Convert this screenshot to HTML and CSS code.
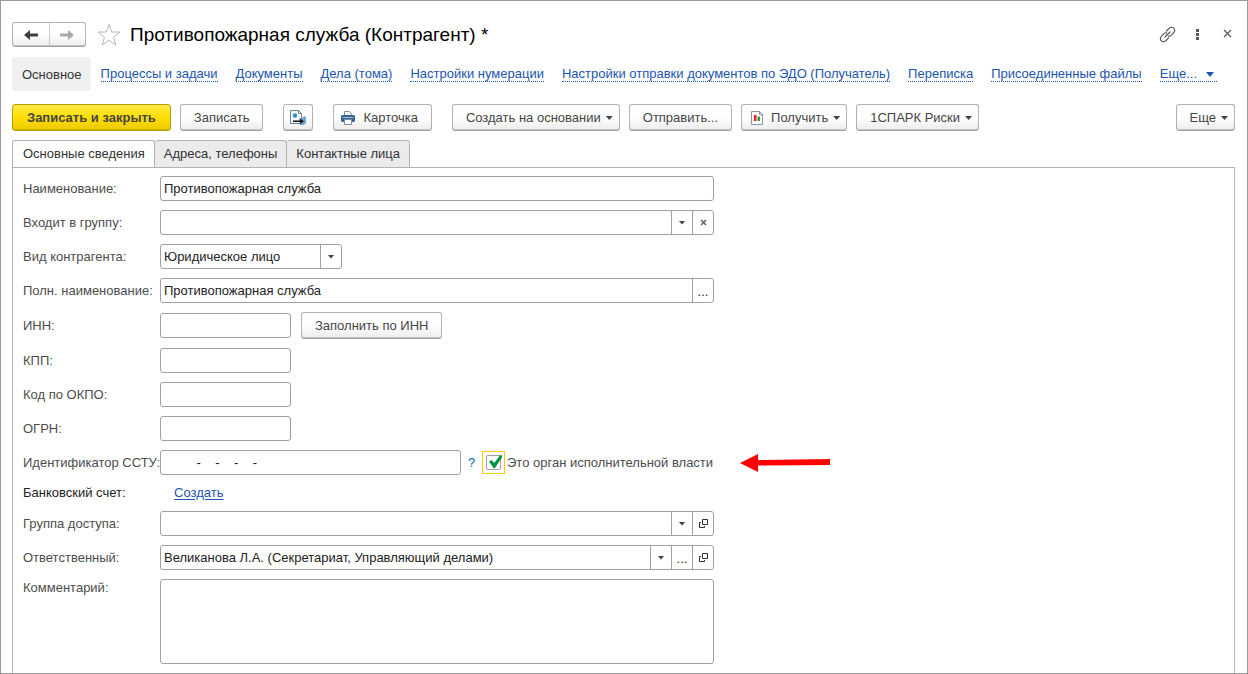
FILE: index.html
```html
<!DOCTYPE html>
<html lang="ru">
<head>
<meta charset="utf-8">
<title>Противопожарная служба (Контрагент)</title>
<link rel="stylesheet" href="styles.css">
</head>
<body>
<main class="window">
  <header class="titlebar">
    <div class="history">
      <button class="history-btn" type="button" aria-label="Назад"><svg width="16" height="12" viewBox="0 0 16 12"><path d="M1 6 7 1v3.500h8v3H7V11z" fill="#404040"/></svg></button>
      <button class="history-btn" type="button" aria-label="Вперед"><svg width="16" height="12" viewBox="0 0 16 12"><path d="M15 6 9 1v3.500H1v3h8V11z" fill="#a8a8a8"/></svg></button>
    </div>
    <button class="plain star" type="button" aria-label="В избранное"><svg width="24" height="24" viewBox="0 0 24 24"><path d="M12 1.500 14.700 9H23l-6.500 5.200L18.800 22 12 17.300 5.200 22l2.300-7.800L1 9h8.300z" fill="#fff" stroke="#b4b8bf"/></svg></button>
    <h1 class="title">Противопожарная служба (Контрагент) *</h1>
    <div class="window-tools">
      <button class="plain" type="button" aria-label="Ссылка"><svg width="17" height="17" viewBox="0 0 17 17" fill="none" stroke="#555" stroke-width="1.200" stroke-linecap="round"><path d="M7.500 5 10.300 2.200a3 3 0 0 1 4.400 0 3 3 0 0 1 0 4.400L12 9.400a3 3 0 0 1-2.600.8M9.500 12l-2.800 2.800a3 3 0 0 1-4.400 0 3 3 0 0 1 0-4.400L5 7.600a3 3 0 0 1 2.600-.8M6 11l5-5"/></svg></button>
      <button class="plain" type="button" aria-label="Меню"><svg width="17" height="17" viewBox="0 0 17 17" fill="#555"><path d="M7 3h3v3H7zM7 7h3v3H7zM7 11h3v3H7z"/></svg></button>
      <button class="plain" type="button" aria-label="Закрыть"><svg width="17" height="17" viewBox="0 0 17 17" stroke="#555" stroke-width="1.200"><path d="M5 4l7 7M12 4l-7 7"/></svg></button>
    </div>
  </header>

  <nav class="nav">
    <a class="nav-current" href="#">Основное</a>
    <a class="nav-link" href="#">Процессы и задачи</a>
    <a class="nav-link" href="#">Документы</a>
    <a class="nav-link" href="#">Дела (тома)</a>
    <a class="nav-link" href="#">Настройки нумерации</a>
    <a class="nav-link" href="#">Настройки отправки документов по ЭДО (Получатель)</a>
    <a class="nav-link" href="#">Переписка</a>
    <a class="nav-link" href="#">Присоединенные файлы</a>
    <a class="nav-link nav-more" href="#">Еще...<svg width="8" height="5" viewBox="0 0 8 5"><path d="M0 0h8L4 5z" fill="#1c55ae"/></svg></a>
  </nav>

  <div class="toolbar">
    <div class="group">
      <button class="btn btn-primary" type="button">Записать и закрыть</button>
      <button class="btn" type="button">Записать</button>
    </div>
    <button class="btn btn-icon" type="button" aria-label="Обмен"><svg width="18" height="18" viewBox="0 0 18 18"><path d="M1.500 1.500h8l3 3v10h-11z" fill="#f7fafc" stroke="#6f8296"/><path d="M9.500 1.500v3h3" fill="none" stroke="#6f8296"/><circle cx="6" cy="6.500" r="2.200" fill="#2f8bd0"/><path d="M6 5l2 1-1 2z" fill="#3fb040"/><path d="M10 9l2 1 3-3 2 1v6l-2 2h-4z" fill="#6fa6d0"/><path d="M4 11.500h8v1.500H4zM11 9.500l4 2.700-4 2.800z" fill="#111"/></svg></button>
    <button class="btn btn-print" type="button"><svg width="14" height="14" viewBox="0 0 14 14"><path d="M3.500 5V.500h5l2 2V5" fill="#fff" stroke="#7890a8"/><path d="M1 4h12l1 1v5l-1 1H1l-1-1V5z" fill="#3b6390"/><path d="M3.500 8.500h7v5h-7z" fill="#fff" stroke="#7890a8"/><path d="M2 6.500h10" stroke="#a9c1d8"/></svg>Карточка</button>
    <div class="group">
      <button class="btn btn-menu" type="button">Создать на основании<i class="caret"></i></button>
      <button class="btn" type="button">Отправить...</button>
      <button class="btn btn-report" type="button"><svg width="12" height="14" viewBox="0 0 12 14"><path d="M.500.500h8l3 3v10H.500z" fill="#fff" stroke="#8796a5"/><path d="M8.500.500v3h3" fill="none" stroke="#8796a5"/><path d="M3 4h2.500v6H3z" fill="#e22"/><path d="M6.500 5.500H9V10H6.500z" fill="#2e9e3c"/></svg>Получить<i class="caret"></i></button>
      <button class="btn btn-menu" type="button">1СПАРК Риски<i class="caret"></i></button>
    </div>
    <button class="btn btn-menu btn-more" type="button">Еще<i class="caret"></i></button>
  </div>

  <div class="tabs" role="tablist">
    <button class="tab tab-active" role="tab" aria-selected="true" type="button">Основные сведения</button>
    <button class="tab" role="tab" aria-selected="false" type="button">Адреса, телефоны</button>
    <button class="tab" role="tab" aria-selected="false" type="button">Контактные лица</button>
  </div>

  <form class="panel">
    <label for="name">Наименование:</label>
    <div class="field wide"><input id="name" type="text" value="Противопожарная служба"></div>

    <label for="parent">Входит в группу:</label>
    <div class="field wide"><input id="parent" type="text"><button type="button" aria-label="Выбрать"><i class="caret"></i></button><button type="button" aria-label="Очистить"><svg width="7" height="7" viewBox="0 0 7 7" stroke="#555" stroke-width="1.300"><path d="M1 1l5 5M6 1l-5 5"/></svg></button></div>

    <label for="kind">Вид контрагента:</label>
    <div class="field kind"><select id="kind"><option>Юридическое лицо</option></select><span class="kind-arrow"><i class="caret"></i></span></div>

    <label for="full">Полн. наименование:</label>
    <div class="field wide"><input id="full" type="text" value="Противопожарная служба"><button type="button" class="dots">...</button></div>

    <label for="inn">ИНН:</label>
    <div class="line"><div class="field short"><input id="inn" type="text"></div><button class="btn" type="button">Заполнить по ИНН</button></div>

    <label for="kpp">КПП:</label>
    <div class="field short"><input id="kpp" type="text"></div>

    <label for="okpo">Код по ОКПО:</label>
    <div class="field short"><input id="okpo" type="text"></div>

    <label for="ogrn">ОГРН:</label>
    <div class="field short"><input id="ogrn" type="text"></div>

    <label for="sstu">Идентификатор ССТУ:</label>
    <div class="line sstu-line">
      <div class="field sstu"><input id="sstu" type="text" value="         -    -    -    -"></div>
      <a class="help" href="#">?</a>
      <span class="check-focus"><input class="check" id="gov" type="checkbox" checked></span>
      <label for="gov">Это орган исполнительной власти</label>
      <svg class="pointer" width="90" height="18" viewBox="0 0 90 18"><path d="M0 9 18 0v6L90 5v6l-72 .500V18z" fill="#f00"/></svg>
    </div>

    <span class="dark">Банковский счет:</span>
    <div class="link-row"><a class="create" href="#">Создать</a></div>

    <label for="access">Группа доступа:</label>
    <div class="field wide"><input id="access" type="text"><button type="button" aria-label="Выбрать"><i class="caret"></i></button><button type="button" aria-label="Открыть"><svg width="9" height="9" viewBox="0 0 9 9" fill="none" stroke="#333"><path d="M3.500.500h5v5h-5zM2 3.500H.500v5h5V7"/></svg></button></div>

    <label for="owner">Ответственный:</label>
    <div class="field wide"><input id="owner" type="text" value="Великанова Л.А. (Секретариат, Управляющий делами)"><button type="button" aria-label="Выбрать"><i class="caret"></i></button><button type="button" class="dots">...</button><button type="button" aria-label="Открыть"><svg width="9" height="9" viewBox="0 0 9 9" fill="none" stroke="#333"><path d="M3.500.500h5v5h-5zM2 3.500H.500v5h5V7"/></svg></button></div>

    <label class="top" for="comment">Комментарий:</label>
    <textarea class="comment wide" id="comment"></textarea>
  </form>
</main>
</body>
</html>
```

FILE: styles.css
```css
* { box-sizing: border-box; }

body {
  margin: 0;
  background: #fff;
  color: #333;
  font: 13px/16px "Liberation Sans", Arial, sans-serif;
}

button, input, select, textarea { font: inherit; color: inherit; margin: 0; }
svg { display: block; flex: none; }

.window {
  display: flex;
  flex-direction: column;
  min-height: 100vh;
  padding: 21px 12px 0 11px;
  border: 1px solid #999;
}

.titlebar { display: flex; align-items: center; height: 25px; }

.history {
  display: flex;
  width: 74px;
  height: 25px;
  border: 1px solid #b3b3b3;
  border-bottom-color: #a0a0a0;
  border-radius: 3px;
  background: linear-gradient(#fff 50%, #eee);
  box-shadow: inset 0 -1px #c4c4c4;
}
.history-btn {
  flex: 1;
  display: flex;
  align-items: center;
  justify-content: center;
  padding: 0;
  border: 0;
  background: none;
}
.history-btn + .history-btn { border-left: 1px solid #ccc; }

.plain {
  display: flex;
  align-items: center;
  padding: 0;
  border: 0;
  background: none;
}
.star { margin: 0 9px 0 11px; }
.title { margin: 0; color: #000; font-size: 19px; line-height: 24px; font-weight: 400; }
.window-tools { display: flex; gap: 13px; margin: 0 -1px 0 auto; }

.nav {
  display: flex;
  align-items: center;
  gap: 18px;
  height: 34px;
  margin-top: 10px;
  white-space: nowrap;
}
.nav-current {
  padding: 10px 9px 8px 10px;
  margin-right: -8px;
  border-radius: 4px;
  background: #f0f0f0;
  color: #333;
  text-decoration: none;
}
.nav-link {
  padding-top: 1px;
  border-bottom: 1px dotted #1c55ae;
  color: #1c55ae;
  line-height: 14px;
  text-decoration: none;
}
.nav-more { display: flex; align-items: center; gap: 9px; padding-right: 3px; }

.toolbar { display: flex; gap: 20px; margin-top: 13px; white-space: nowrap; }
.group { display: flex; gap: 9px; }

.btn {
  display: flex;
  align-items: center;
  justify-content: center;
  height: 27px;
  padding: 1px 13px 0;
  border: 1px solid #b3b3b3;
  border-bottom-color: #a0a0a0;
  border-radius: 3px;
  background: linear-gradient(#fff 50%, #ececec);
  box-shadow: inset 0 -1px #c4c4c4;
  color: #444;
}
.btn-primary {
  padding: 1px 14px 0;
  border-color: #b89f00;
  background: linear-gradient(#ffe94a, #ffdf00 50%, #ecc900);
  box-shadow: inset 0 -1px #cbb000;
  font-weight: 700;
}
.btn-icon { width: 30px; padding: 0; }
.btn-print { gap: 8px; padding-left: 7px; }
.btn-report { gap: 8px; padding: 1px 6px 0 9px; }
.btn-menu { gap: 5px; padding-right: 6px; }
.btn-report .caret { margin-left: -3px; }
.btn-more { margin-left: auto; }

.caret {
  width: 7px;
  height: 4px;
  background: #444;
  clip-path: polygon(0 0, 100% 0, 50% 100%);
}

.tabs { display: flex; margin-top: 9px; }
.tab {
  height: 28px;
  margin-bottom: -1px;
  padding: 0 9px;
  border: 1px solid #b3b3b3;
  border-left-width: 0;
  border-radius: 3px 3px 0 0;
  background: #ebebeb;
  color: #333;
}
.tab-active { padding-left: 10px; border-left-width: 1px; border-bottom-color: #fff; background: #fff; }

.panel {
  flex: 1;
  display: grid;
  grid-template-columns: 137px minmax(0, 1fr);
  align-content: start;
  align-items: center;
  row-gap: 9px;
  padding: 8px 10px 9px;
  border: 1px solid #b3b3b3;
  border-bottom: 0;
  color: #4d4d4d;
  white-space: nowrap;
}
.wide { width: 100%; max-width: 554px; }
.line { display: flex; align-items: center; gap: 10px; }

.field {
  display: flex;
  height: 25px;
  border: 1px solid #a0a0a0;
  border-radius: 3px;
  background: #fff;
  color: #222;
}
.field input, .field select {
  flex: 1;
  min-width: 0;
  padding: 0 3px;
  border: 0;
  outline: 0;
  background: none;
}
.field button, .kind-arrow {
  display: flex;
  align-items: center;
  justify-content: center;
  width: 21px;
  padding: 0;
  border: 0;
  border-left: 1px solid #a0a0a0;
  background: none;
}
.field .dots { padding-top: 3px; }
.field select { appearance: none; }
.kind { width: 182px; }
.short { width: 131px; }
.sstu { width: 301px; }
.sstu input { white-space: pre; }

.sstu-line { gap: 2px; }
.help { width: 17px; color: #0070b8; text-align: center; text-decoration: none; }
.check-focus { display: flex; padding: 3px; border: 1px solid #fc0; }
.check {
  appearance: none;
  width: 15px;
  height: 15px;
  border: 1px solid #a0a0a0;
  border-radius: 2px;
  position: relative;
}
.check:checked::after {
  content: "";
  position: absolute;
  inset: -1px -2px 1px 2px;
  background: #009646;
  clip-path: polygon(0 50%, 20% 38%, 40% 62%, 86% 0, 100% 4%, 100% 20%, 46% 100%, 34% 100%);
}
.pointer { margin-left: 25px; }

.dark { color: #222; }
.link-row { height: 18px; padding-left: 14px; line-height: 18px; }
.create { color: #1c55ae; text-underline-offset: 2px; }
.top { align-self: start; padding-top: 1px; }

.comment {
  display: block;
  height: 85px;
  padding: 3px;
  border: 1px solid #a0a0a0;
  border-radius: 3px;
  resize: none;
}
```
